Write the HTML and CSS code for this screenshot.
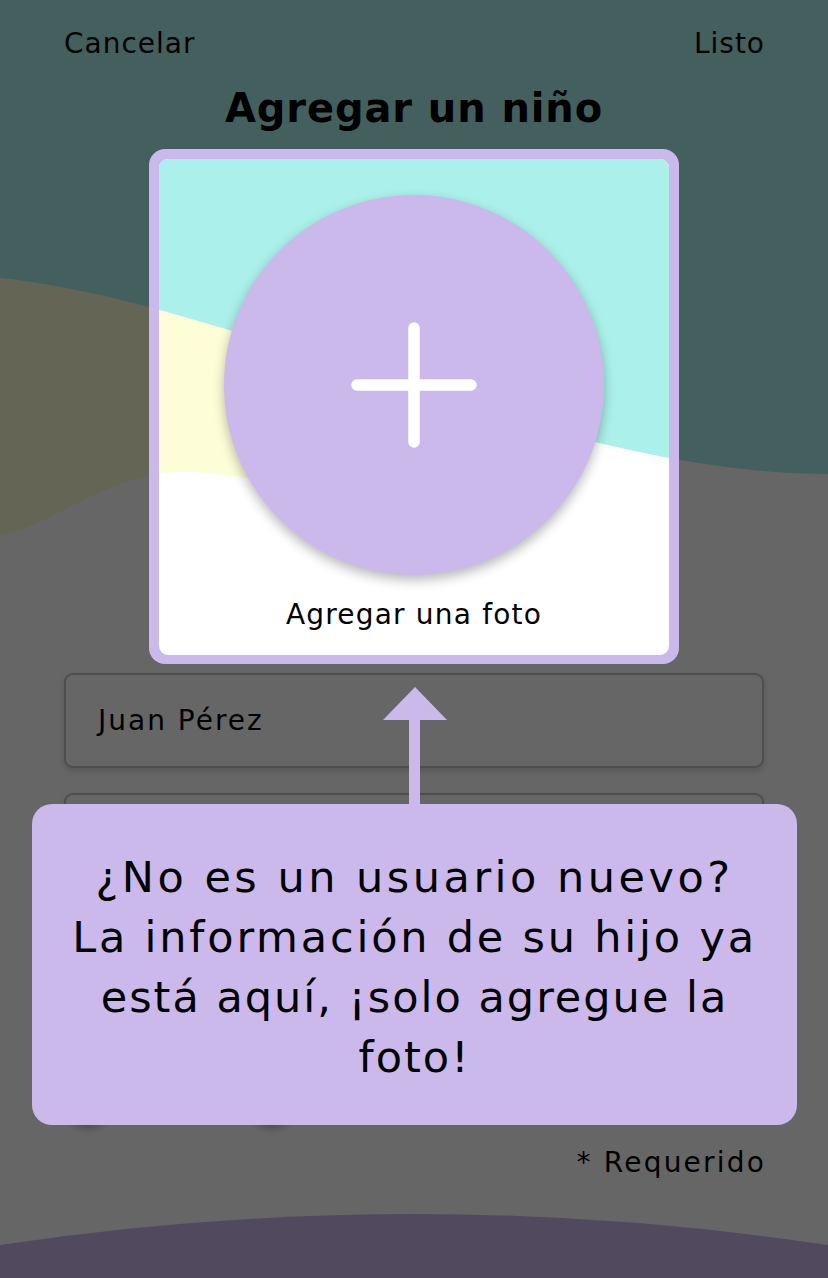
FILE: index.html
```html
<!DOCTYPE html>
<html lang="es">
<head>
<meta charset="utf-8">
<title>Agregar un niño</title>
<link rel="stylesheet" href="styles.css">
</head>
<body>
<svg class="bg" viewBox="0 0 828 1278" width="828" height="1278" aria-hidden="true">
  <rect x="0" y="0" width="828" height="1278" fill="#ffffff"/>
  <path d="M0,200 L0,536 C60,522 110,472 185,472 C250,472 300,500 400,470 L500,400 L500,200 Z" fill="#fdfdd8"/>
  <path d="M0,0 H828 V474 C550,474 250,305 0,278 Z" fill="#abf0ea"/>
  <path d="M0,1245 Q414,1183 828,1245 L828,1278 L0,1278 Z" fill="#cbb9ec"/>
</svg>

<div class="page">
  <header class="topbar">
    <span class="link link-cancel">Cancelar</span>
    <span class="link">Listo</span>
  </header>
  <h1 class="title">Agregar un niño</h1>

  <section class="card">
    <div class="card-inner">
      <svg class="card-bg" viewBox="159 159 510 496" width="510" height="496" aria-hidden="true">
        <rect x="0" y="0" width="828" height="1278" fill="#ffffff"/>
        <path d="M0,200 L0,536 C60,522 110,472 185,472 C250,472 300,500 400,470 L500,400 L500,200 Z" fill="#fdfdd8"/>
        <path d="M0,0 H828 V474 C550,474 250,305 0,278 Z" fill="#abf0ea"/>
      </svg>
      <div class="photo-btn">
        <svg class="plus" viewBox="0 0 126 126" width="126" height="126" aria-hidden="true">
          <path d="M63,6 V120 M6,63 H120" stroke="#ffffff" stroke-width="11.5" stroke-linecap="round" fill="none"/>
        </svg>
      </div>
      <p class="photo-label">Agregar una foto</p>
    </div>
  </section>

  <div class="field"><span>Juan Pérez</span></div>
  <div class="field field-hidden"><span>&nbsp;</span></div>
  <div class="radios">
    <span class="radio"></span>
    <span class="radio"></span>
  </div>
  <p class="required">* Requerido</p>
</div>

<div class="overlay"></div>

<div class="tooltip">
  <div class="arrow">
    <span class="arrow-head"></span>
    <span class="arrow-stem"></span>
  </div>
  <div class="bubble">
    <p><span class="line-wide">¿No es un usuario nuevo?</span><br><span class="line-mid">La información de su hijo ya</span><br>está aquí, ¡solo agregue la<br>foto!</p>
  </div>
</div>
</body>
</html>
```

FILE: styles.css
```css
* { box-sizing: border-box; }

html, body {
  margin: 0;
  padding: 0;
}

body {
  width: 828px;
  height: 1278px;
  overflow: hidden;
  position: relative;
  font-family: "DejaVu Sans", "Noto Sans", sans-serif;
  color: #000;
  background: #fff;
}

.bg {
  position: absolute;
  left: 0;
  top: 0;
  display: block;
  z-index: 0;
}

.page {
  position: relative;
  padding: 0 64px;
  display: flex;
  flex-direction: column;
}

.topbar {
  display: flex;
  justify-content: space-between;
  padding-top: 26px;
  height: 83px;
}

.link {
  font-size: 28px;
  line-height: 36px;
  font-weight: 400;
  letter-spacing: 1px;
  margin-right: -1px;
}

.title {
  margin: 0;
  text-align: center;
  font-size: 40px;
  line-height: 50px;
  font-weight: 700;
  letter-spacing: 0.9px;
  height: 66px;
}

.card {
  position: relative;
  z-index: 3;
  align-self: center;
  width: 530px;
  height: 515px;
  padding: 10px;
  background: #cbb9ec;
  border-radius: 16px;
}

.card-inner {
  position: relative;
  width: 510px;
  height: 496px;
  border-radius: 9px;
  overflow: hidden;
  display: flex;
  flex-direction: column;
  align-items: center;
}

.card-bg {
  position: absolute;
  inset: 0;
  display: block;
}

.photo-btn {
  position: relative;
  margin-top: 36px;
  width: 380px;
  height: 380px;
  border-radius: 50%;
  background: #cbb9ec;
  box-shadow: 0 5px 12px rgba(0, 0, 0, 0.28);
  display: flex;
  align-items: center;
  justify-content: center;
}

.photo-label {
  position: relative;
  margin: 22px 0 0;
  font-size: 28px;
  line-height: 36px;
  letter-spacing: 1.2px;
}

.field {
  margin-top: 9px;
  height: 95px;
  border: 2px solid #c4c4c4;
  border-radius: 9px;
  background: #fff;
  box-shadow: 0 3px 6px rgba(0, 0, 0, 0.16);
  display: flex;
  align-items: center;
  padding-left: 32px;
  font-size: 28px;
  line-height: 36px;
  letter-spacing: 2px;
}

.field-hidden {
  margin-top: 25px;
}

.radios {
  display: flex;
  gap: 140px;
  padding-left: 2px;
  margin-top: 192px;
}

.radio {
  width: 44px;
  height: 44px;
  border-radius: 50%;
  background: #fff;
  box-shadow: 0 4px 8px rgba(0, 0, 0, 0.3);
}

.required {
  margin: 21px -2px 0 0;
  text-align: right;
  font-size: 28px;
  line-height: 36px;
  letter-spacing: 2.2px;
}

.overlay {
  position: absolute;
  inset: 0;
  z-index: 2;
  background: rgba(0, 0, 0, 0.6);
}

.tooltip {
  position: absolute;
  z-index: 4;
  left: 32px;
  top: 687px;
  width: 765px;
  display: flex;
  flex-direction: column;
  align-items: center;
}

.arrow {
  display: flex;
  flex-direction: column;
  align-items: center;
}

.arrow-head {
  width: 0;
  height: 0;
  border-left: 32px solid transparent;
  border-right: 32px solid transparent;
  border-bottom: 33px solid #cbb9ec;
}

.arrow-stem {
  width: 11px;
  height: 84px;
  background: #cbb9ec;
}

.bubble {
  width: 765px;
  height: 321px;
  background: #cbb9ec;
  border-radius: 20px;
  padding: 43px 10px 0;
}

.bubble p {
  margin: 0;
  text-align: center;
  font-size: 43px;
  line-height: 60px;
  font-weight: 400;
  letter-spacing: 2px;
}

.line-wide {
  letter-spacing: 3.5px;
}

.line-mid {
  letter-spacing: 2.8px;
}
```
